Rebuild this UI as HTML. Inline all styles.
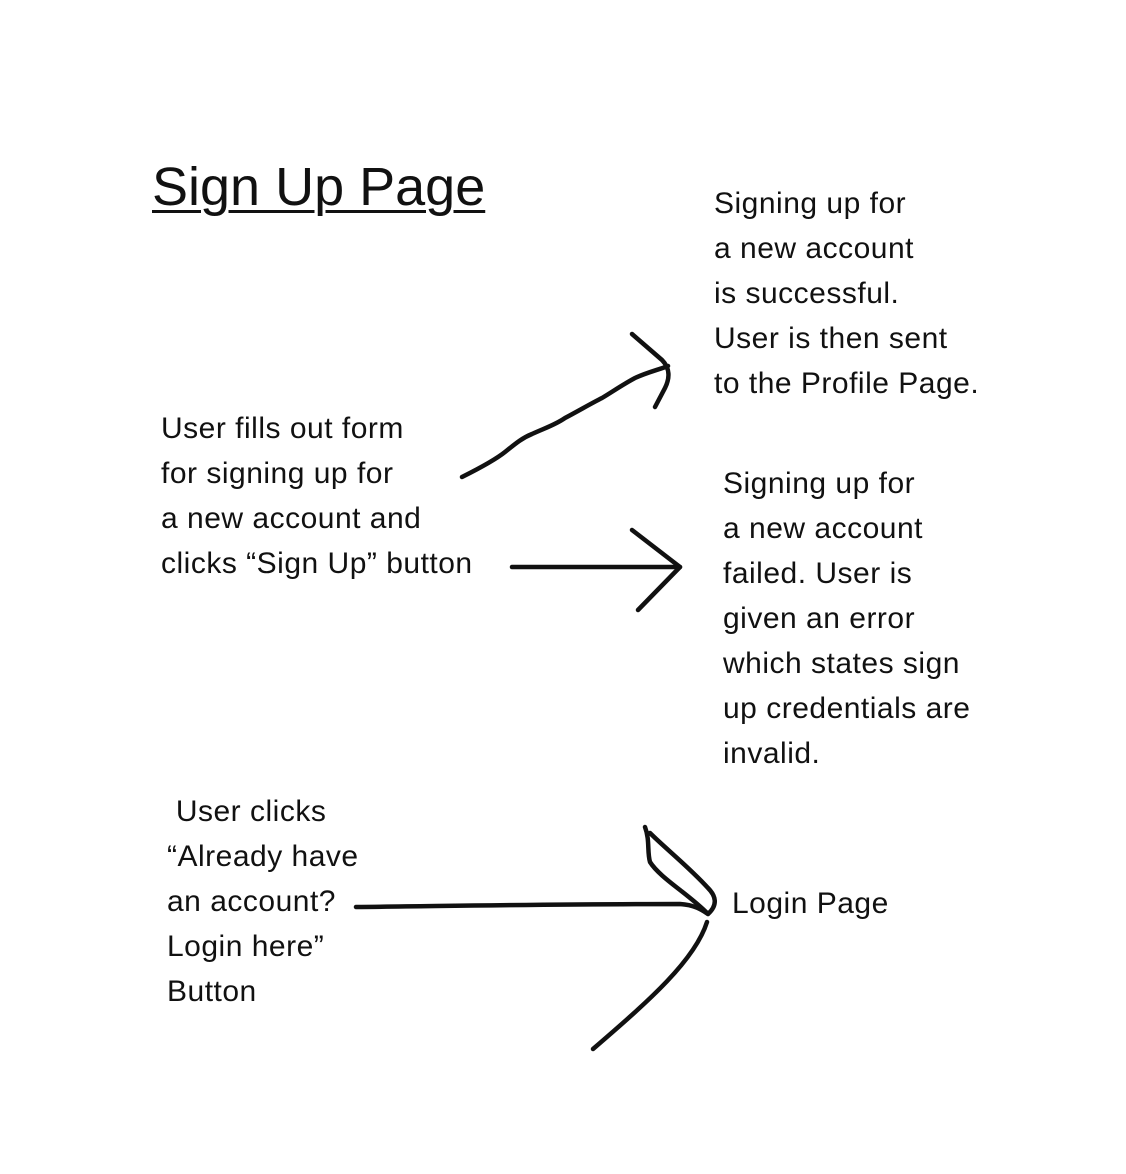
<!DOCTYPE html>
<html><head><meta charset="utf-8">
<style>
html,body{margin:0;padding:0;background:#fff;}
body{width:1126px;height:1174px;position:relative;overflow:hidden;font-family:"Liberation Sans",Arial,sans-serif;color:#111;}
.t{position:absolute;font-size:30px;letter-spacing:0.5px;line-height:45px;white-space:nowrap;}
h1{position:absolute;left:152px;top:157px;margin:0;font-weight:normal;font-size:54px;line-height:60px;text-decoration:underline;text-decoration-thickness:3px;text-underline-offset:5px;}
svg{position:absolute;left:0;top:0;}
</style></head><body>
<h1>Sign Up Page</h1>
<div class="t" style="left:714px;top:181px">Signing up for<br>a new account<br>is successful.<br>User is then sent<br>to the Profile Page.</div>
<div class="t" style="left:161px;top:406px">User fills out form<br>for signing up for<br>a new account and<br>clicks “Sign Up” button</div>
<div class="t" style="left:723px;top:461px">Signing up for<br>a new account<br>failed. User is<br>given an error<br>which states sign<br>up credentials are<br>invalid.</div>
<div class="t" style="left:167px;top:789px">&nbsp;User clicks<br>“Already have<br>an account?<br>Login here”<br>Button</div>
<div class="t" style="left:732px;top:881px">Login Page</div>
<svg width="1126" height="1174" fill="none" stroke="#111" stroke-width="4.5" stroke-linecap="round" stroke-linejoin="round">
<path d="M462 477 C480 468 495 460 505 452 C515 444 522 438 532 434 C545 428 555 425 565 418 C580 410 592 403 602 398 C612 392 622 385 635 378 C648 372 658 370 668 366"/>
<path d="M632 334 L662 360 C670 368 670 378 665 388 L655 407"/>
<path d="M512 567 L680 567"/>
<path d="M632 530 L680 567 L638 610"/>
<path d="M356 907 C450 906 560 904 680 904 C695 905 702 910 708 914"/>
<path d="M645 827 C650 840 647 852 650 862 C660 878 690 895 708 914 C718 905 716 896 708 888 C690 868 665 848 650 833"/>
<path d="M707 922 C695 960 650 1000 593 1049"/>
</svg>
</body></html>
